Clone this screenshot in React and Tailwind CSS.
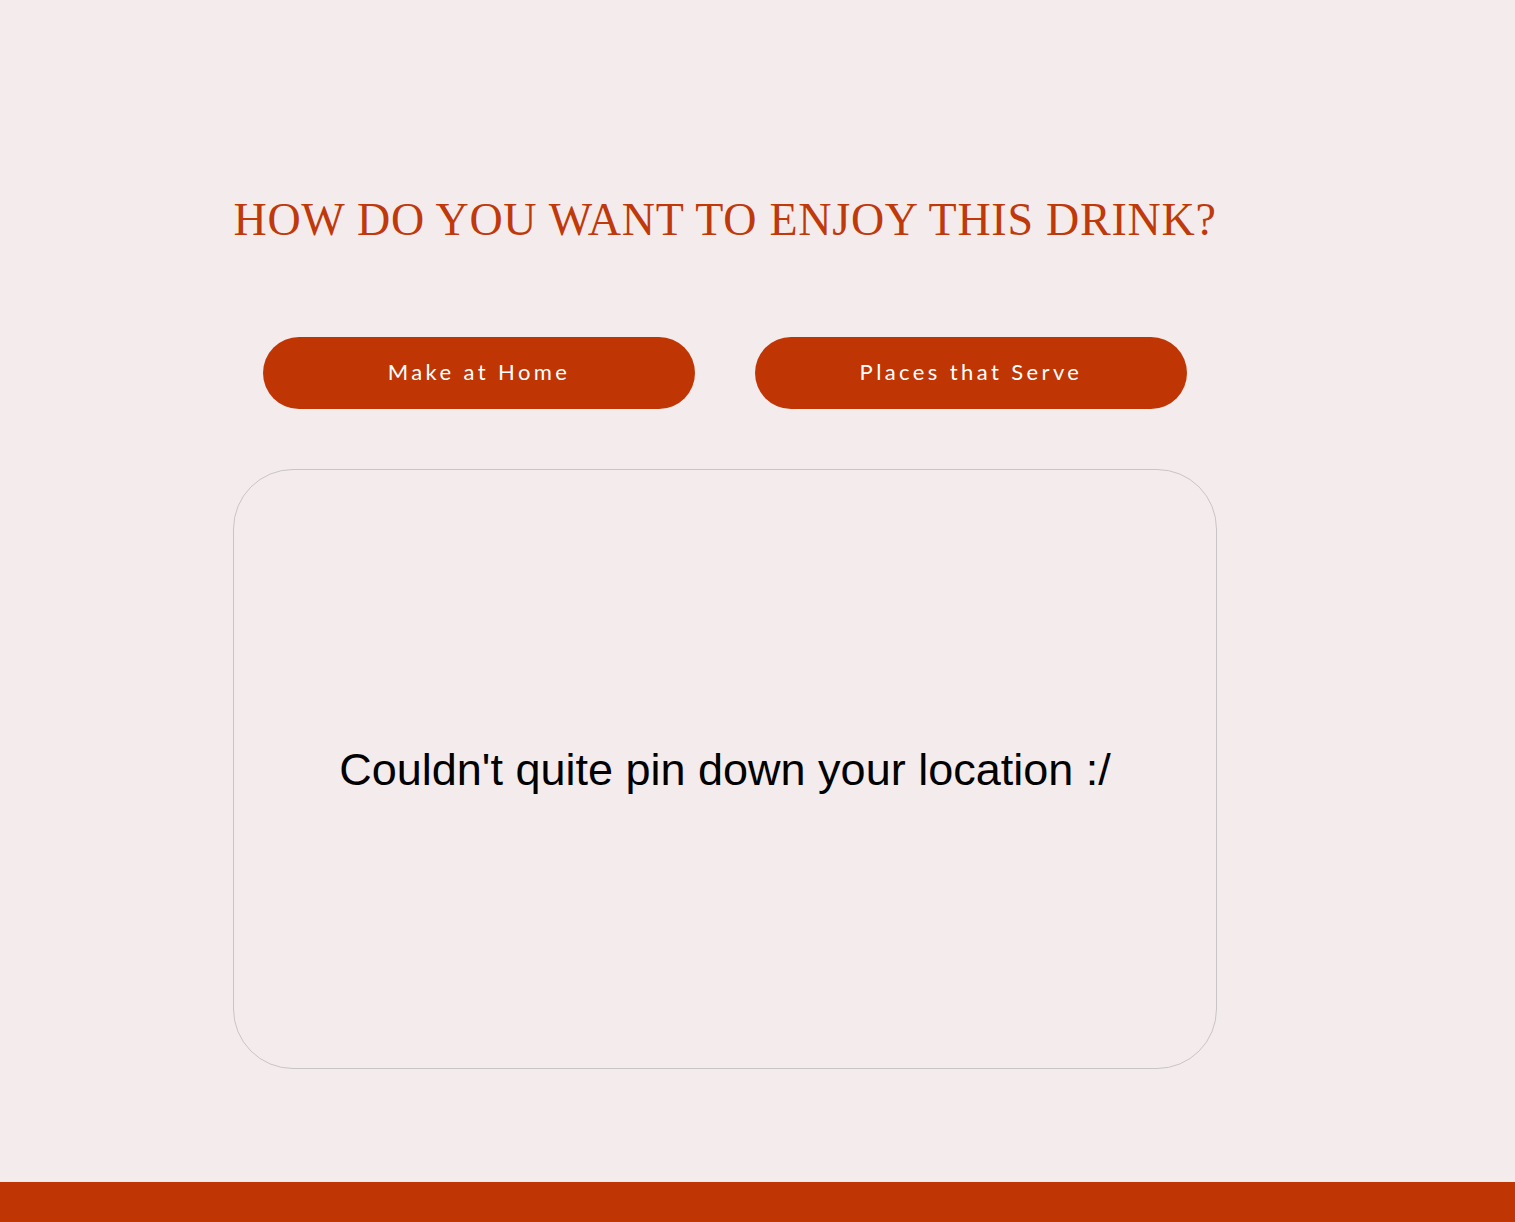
export default function App() {
  return (
    <div className="min-h-[1222px] bg-[#f3ebec] flex flex-col">
      <main className="flex-1 pt-[190px] pl-[233px]">
        <div className="w-[984px] flex flex-col">
          <h1 className="text-center text-[#c0390a] uppercase text-[46px] leading-[60px] tracking-[0.75px]" style={{ fontFamily: '"Liberation Serif", serif' }}>
            How do you want to enjoy this drink?
          </h1>
          <div className="mt-[87px] px-[30px] flex gap-[60px]">
            <button className="w-[432px] h-[72px] pb-[3px] rounded-full bg-[#bf3604] text-white text-[22px] font-normal tracking-[3.4px]" style={{ fontFamily: 'Lato, sans-serif' }}>
              Make at Home
            </button>
            <button className="w-[432px] h-[72px] pb-[3px] rounded-full bg-[#bf3604] text-white text-[22px] font-normal tracking-[3.4px]" style={{ fontFamily: 'Lato, sans-serif' }}>
              Places that Serve
            </button>
          </div>
          <div className="mt-[60px] h-[600px] rounded-[60px] border border-[#c9c5c6] flex items-center justify-center">
            <p className="text-black text-[45px] leading-none" style={{ fontFamily: '"Liberation Sans", Arial, sans-serif' }}>
              Couldn't quite pin down your location :/
            </p>
          </div>
        </div>
      </main>
      <footer className="mt-[113px] h-[40px] bg-[#bf3604]" />
    </div>
  );
}
